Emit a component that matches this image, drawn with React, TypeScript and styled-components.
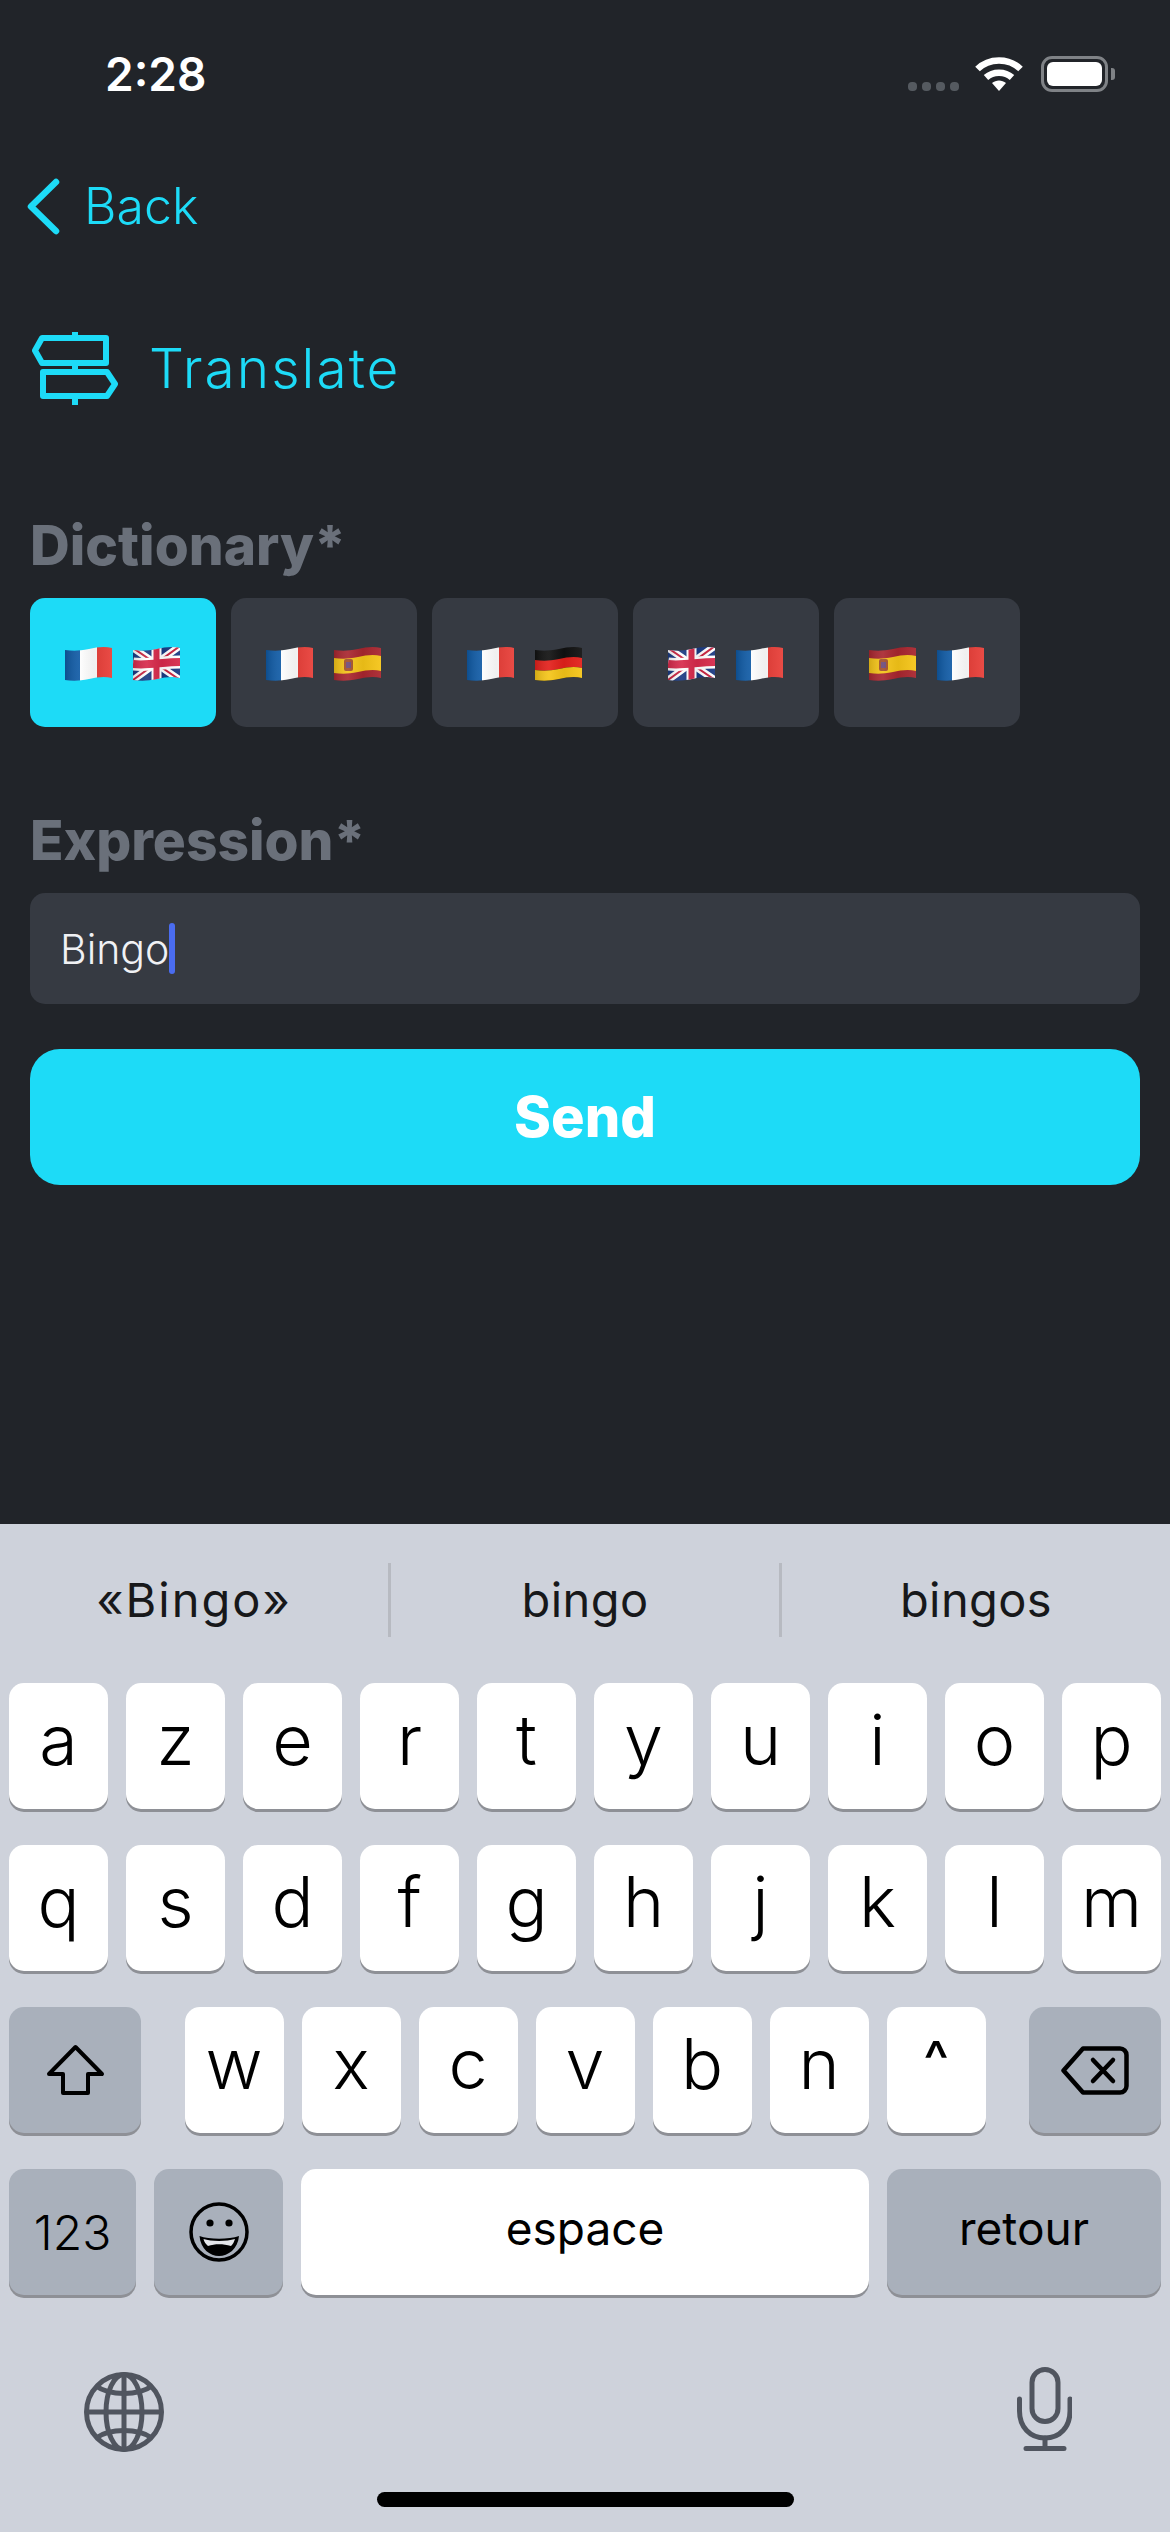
import React from 'react';
import styled, { createGlobalStyle } from 'styled-components';

const cyan = '#1ddbf7';
const dark = '#212429';
const panel = '#363a42';

const GlobalStyle = createGlobalStyle`
	html, body {
		margin: 0;
		padding: 0;
		background: ${dark};
	}
	* {
		box-sizing: border-box;
	}
`;

const Screen = styled.div`
	width: 1170px;
	height: 2532px;
	display: flex;
	flex-direction: column;
	overflow: hidden;
	font-family: Inter, 'Liberation Sans', sans-serif;
`;

const Main = styled.div`
	height: 1524px;
	background: ${dark};
`;

const StatusBar = styled.div`
	height: 178px;
	padding: 56px 55px 0 105px;
	display: flex;
	justify-content: space-between;
	align-items: flex-start;
`;

const Time = styled.div`
	font-size: 46px;
	line-height: 36px;
	font-weight: 600;
	color: #fff;
`;

const StatusIcons = styled.div`
	display: flex;
	align-items: flex-start;
`;

const SignalDots = styled.div`
	display: flex;
	gap: 5px;
	margin: 26px 15px 0 0;
`;

const SignalDot = styled.span`
	width: 9px;
	height: 9px;
	border-radius: 4px;
	background: #555a60;
`;

const Battery = styled.div`
	width: 67px;
	height: 36px;
	margin-left: 17px;
	padding: 3px;
	border: 3px solid #7f8286;
	border-radius: 11px;
`;

const BatteryFill = styled.div`
	height: 100%;
	border-radius: 6px;
	background: #fff;
`;

const BatteryNub = styled.div`
	width: 4px;
	height: 12px;
	margin: 12px 0 0 3px;
	border-radius: 0 3px 3px 0;
	background: #7f8286;
`;

const BackRow = styled.div`
	height: 57px;
	padding-left: 27px;
	display: flex;
	align-items: center;
	gap: 24px;
`;

const BackText = styled.span`
	font-size: 50px;
	line-height: 57px;
	font-weight: 300;
	color: ${cyan};
`;

const TitleRow = styled.div`
	height: 73px;
	margin-top: 97px;
	padding-left: 32px;
	display: flex;
	align-items: center;
	gap: 31px;
`;

const TitleText = styled.span`
	font-size: 55px;
	line-height: 73px;
	font-weight: 300;
	letter-spacing: 2px;
	color: ${cyan};
`;

const Form = styled.div`
	padding: 0 30px;
`;

const Label = styled.div<{ $top: number }>`
	height: 60px;
	margin-top: ${p => p.$top}px;
	font-size: 55px;
	line-height: 60px;
	font-weight: 800;
	color: #6a707a;
`;

const PairRow = styled.div`
	margin-top: 23px;
	display: flex;
	gap: 15px;
`;

const Pair = styled.div<{ $active?: boolean }>`
	width: 186px;
	height: 129px;
	padding: 3px 2px 0 0;
	display: flex;
	align-items: center;
	justify-content: center;
	gap: 21px;
	border-radius: 15px;
	background: ${p => (p.$active ? cyan : panel)};
`;

const Input = styled.div`
	height: 111px;
	margin-top: 23px;
	padding-left: 30px;
	display: flex;
	align-items: center;
	border-radius: 15px;
	background: ${panel};
	font-size: 41px;
	font-weight: 300;
	color: #f0f1f4;
`;

const Caret = styled.span`
	width: 6px;
	height: 51px;
	border-radius: 3px;
	background: #4a6cf0;
`;

const SendButton = styled.div`
	height: 136px;
	margin-top: 45px;
	display: flex;
	align-items: center;
	justify-content: center;
	border-radius: 30px;
	background: ${cyan};
	font-size: 56px;
	font-weight: 800;
	color: #fff;
`;

const Keyboard = styled.div`
	flex: 1;
	background: #ced2db;
`;

const Suggestions = styled.div`
	padding: 39px 0 46px;
	display: flex;
	align-items: center;
`;

const Suggestion = styled.div<{ $spacing?: number }>`
	flex: 1;
	text-align: center;
	font-size: 47px;
	line-height: 74px;
	letter-spacing: ${p => p.$spacing ?? 0.4}px;
	color: #17181a;
`;

const Divider = styled.div`
	width: 3px;
	height: 74px;
	background: #b7bac1;
`;

const KeyRows = styled.div`
	padding: 0 9px;
	display: flex;
	flex-direction: column;
	gap: 36px;
`;

const KeyRow = styled.div<{ $spread?: boolean }>`
	display: flex;
	gap: 18px;
	justify-content: ${p => (p.$spread ? 'space-between' : 'flex-start')};
`;

const LetterGroup = styled.div`
	display: flex;
	gap: 18px;
`;

const Key = styled.div<{ $width?: number; $muted?: boolean }>`
	width: ${p => p.$width ?? 99}px;
	height: 126px;
	padding-bottom: 14px;
	display: flex;
	align-items: center;
	justify-content: center;
	border-radius: 15px;
	background: ${p => (p.$muted ? '#a9b0bb' : '#fff')};
	box-shadow: 0 3px 0 #8e9096;
	font-size: 70px;
	font-weight: 350;
	color: #000;
`;

const CircumflexKey = styled(Key)`
	font-size: 54px;
	font-weight: 500;
	padding-bottom: 22px;
`;

const WordKey = styled(Key)`
	font-size: 46px;
	font-weight: 400;
	padding-bottom: 8px;
`;

const NumberKey = styled(Key)`
	font-size: 48px;
	font-weight: 300;
	padding-bottom: 0;
`;

const IconKey = styled(Key)`
	padding-bottom: 0;
`;

const BottomRow = styled.div`
	margin-top: 74px;
	padding: 0 98px 0 84px;
	display: flex;
	justify-content: space-between;
	align-items: center;
	height: 85px;
`;

const MicIcon = styled.svg`
	margin-bottom: 5px;
`;

const HomeBar = styled.div`
	width: 417px;
	height: 15px;
	margin: 38px auto 0;
	border-radius: 8px;
	background: #000;
`;

type FlagKind = 'fr' | 'gb' | 'es' | 'de';

// one strip of the waving flag, a and b are its top and bottom offsets
const band = (a: number, b: number) =>
	`M0 ${4 + a} C8 ${5 + a} 14 ${5 + a} 24 ${3 + a} C32 ${1 + a} 40 ${a} 47 ${2 + a} L47 ${2 + b} C40 ${b} 32 ${1 + b} 24 ${3 + b} C14 ${5 + b} 8 ${5 + b} 0 ${4 + b} Z`;

function Flag({ kind }: { kind: FlagKind }) {
	return (
		<svg width="47" height="36" viewBox="0 0 47 36">
			<defs>
				<clipPath id={`flag-${kind}`}>
					<path d={band(0, 30)} />
				</clipPath>
				<linearGradient id="flag-shade" x1="0" x2="1" y1="0" y2="0">
					<stop offset="0" stopColor="#000" stopOpacity="0.14" />
					<stop offset="0.3" stopColor="#fff" stopOpacity="0.08" />
					<stop offset="0.62" stopColor="#000" stopOpacity="0.06" />
					<stop offset="1" stopColor="#fff" stopOpacity="0.06" />
				</linearGradient>
			</defs>
			<g clipPath={`url(#flag-${kind})`}>
				{kind === 'fr' && (
					<>
						<rect width="15" height="36" fill="#0f5aa5" />
						<rect x="15" width="17" height="36" fill="#fff" />
						<rect x="32" width="15" height="36" fill="#e8403a" />
					</>
				)}
				{kind === 'gb' && (
					<>
						<rect width="47" height="36" fill="#1b3a83" />
						<path d="M0 2 L47 34 M47 0 L0 34" stroke="#fff" strokeWidth="7" />
						<path d="M0 2 L47 34 M47 0 L0 34" stroke="#c8223f" strokeWidth="2" />
						<path d="M23.5 0 V36" stroke="#fff" strokeWidth="10" />
						<path d="M0 18 C14 20 30 16 47 16" stroke="#fff" strokeWidth="13" fill="none" />
						<path d="M23.5 0 V36" stroke="#d72a4b" strokeWidth="6" />
						<path d="M0 18 C14 20 30 16 47 16" stroke="#d72a4b" strokeWidth="8" fill="none" />
					</>
				)}
				{kind === 'es' && (
					<>
						<rect width="47" height="36" fill="#a9262f" />
						<path d={band(8, 23)} fill="#f5c518" />
						<rect x="10" y="13" width="9" height="12" rx="2" fill="#a3502a" />
						<rect x="12" y="16" width="5" height="6" fill="#6d4a7a" />
					</>
				)}
				{kind === 'de' && (
					<>
						<rect width="47" height="36" fill="#111" />
						<path d={band(10, 20)} fill="#e3201b" />
						<path d={band(20, 32)} fill="#f5c518" />
					</>
				)}
				<rect width="47" height="36" fill="url(#flag-shade)" />
			</g>
		</svg>
	);
}

const pairs: [FlagKind, FlagKind][] = [
	['fr', 'gb'],
	['fr', 'es'],
	['fr', 'de'],
	['gb', 'fr'],
	['es', 'fr'],
];

const iconGrey = '#50555f';

export default function App() {
	return (
		<Screen>
			<GlobalStyle />
			<Main>
				<StatusBar>
					<Time>2:28</Time>
					<StatusIcons>
						<SignalDots>
							<SignalDot />
							<SignalDot />
							<SignalDot />
							<SignalDot />
						</SignalDots>
						<svg width="50" height="36" viewBox="0 0 50 36" fill="none" stroke="#fff">
							<path d="M3.5 13 C15 1.5 35 1.5 46.5 13" strokeWidth="6.5" />
							<path d="M12 21.5 C19 15 31 15 38 21.5" strokeWidth="6.5" />
							<path d="M18 27 C22 23.5 28 23.5 32 27 L25 35 Z" fill="#fff" stroke="none" />
						</svg>
						<Battery>
							<BatteryFill />
						</Battery>
						<BatteryNub />
					</StatusIcons>
				</StatusBar>

				<BackRow>
					<svg width="33" height="57" viewBox="0 0 33 57" fill="none" stroke={cyan} strokeWidth="6.5" strokeLinecap="round" strokeLinejoin="round">
						<path d="M29 4 L4 28.5 L29 53" />
					</svg>
					<BackText>Back</BackText>
				</BackRow>

				<TitleRow>
					<svg width="86" height="73" viewBox="0 0 86 73" fill="none" stroke={cyan} strokeWidth="6" strokeLinejoin="round">
						<path d="M10 6 H74 V31 H10 L3 18.5 Z" />
						<path d="M11 40 H75 L83 52 L75 64 H11 Z" />
						<path d="M43 0 V6 M43 31 V40 M43 64 V73" />
					</svg>
					<TitleText>Translate</TitleText>
				</TitleRow>

				<Form>
					<Label $top={110}>Dictionary*</Label>
					<PairRow>
						{pairs.map(([from, to], i) => (
							<Pair key={`${from}-${to}`} $active={i === 0}>
								<Flag kind={from} />
								<Flag kind={to} />
							</Pair>
						))}
					</PairRow>

					<Label $top={83}>Expression*</Label>
					<Input>
						Bingo
						<Caret />
					</Input>
					<SendButton>Send</SendButton>
				</Form>
			</Main>

			<Keyboard>
				<Suggestions>
					<Suggestion $spacing={2}>«Bingo»</Suggestion>
					<Divider />
					<Suggestion>bingo</Suggestion>
					<Divider />
					<Suggestion>bingos</Suggestion>
				</Suggestions>

				<KeyRows>
					<KeyRow>
						{'azertyuiop'.split('').map(c => (
							<Key key={c}>{c}</Key>
						))}
					</KeyRow>
					<KeyRow>
						{'qsdfghjklm'.split('').map(c => (
							<Key key={c}>{c}</Key>
						))}
					</KeyRow>
					<KeyRow $spread>
						<IconKey $width={132} $muted>
							<svg width="59" height="52" viewBox="0 0 59 52" fill="none" stroke="#000" strokeWidth="4" strokeLinejoin="round">
								<path d="M29.5 3 L56 30 H42 V49 H17 V30 H3 Z" />
							</svg>
						</IconKey>
						<LetterGroup>
							{'wxcvbn'.split('').map(c => (
								<Key key={c}>{c}</Key>
							))}
							<CircumflexKey>^</CircumflexKey>
						</LetterGroup>
						<IconKey $width={132} $muted>
							<svg width="68" height="49" viewBox="0 0 68 49" fill="none" stroke="#000" strokeWidth="4.5" strokeLinejoin="round" strokeLinecap="round">
								<path d="M22 2.5 H59 a6.5 6.5 0 0 1 6.5 6.5 V40 a6.5 6.5 0 0 1 -6.5 6.5 H22 L2.5 24.5 Z" />
								<path d="M32 14 L52 35 M52 14 L32 35" />
							</svg>
						</IconKey>
					</KeyRow>
					<KeyRow>
						<NumberKey $width={127} $muted>123</NumberKey>
						<IconKey $width={129} $muted>
							<svg width="60" height="60" viewBox="0 0 60 60">
								<circle cx="30" cy="30" r="28" fill="none" stroke="#000" strokeWidth="3.5" />
								<circle cx="21" cy="21" r="3.6" />
								<circle cx="40" cy="21" r="3.6" />
								<path d="M10.5 34 C20 37.5 40 37.5 50 34 C49 47 39 54 30 54 C21 54 11.5 47 10.5 34 Z" />
								<path d="M14.5 37 C22 39.5 38 39.5 46 37 C45 40 44 42 42 44 C34 41.5 26 41.5 19 44 C17 42 15 40 14.5 37 Z" fill="#e4e6ea" />
							</svg>
						</IconKey>
						<WordKey $width={568}>espace</WordKey>
						<WordKey $width={274} $muted>retour</WordKey>
					</KeyRow>
				</KeyRows>

				<BottomRow>
					<svg width="80" height="80" viewBox="0 0 80 80" fill="none" stroke={iconGrey} strokeWidth="5">
						<circle cx="40" cy="40" r="37.5" />
						<ellipse cx="40" cy="40" rx="18" ry="37.5" />
						<path d="M40 2 V78 M2 40 H78" />
						<path d="M12 14 C26 24 54 24 68 14 M12 66 C26 56 54 56 68 66" />
					</svg>
					<MicIcon width="55" height="84" viewBox="0 0 55 84" fill="none" stroke={iconGrey} strokeWidth="5" strokeLinecap="round">
						<rect x="15" y="2.5" width="26" height="52" rx="13" />
						<path d="M2.5 32 V44 C2.5 60 13 71 28 71 C43 71 53 60 53 44 V32" />
						<path d="M28 71 V81 M9 81.5 H47" />
					</MicIcon>
				</BottomRow>
				<HomeBar />
			</Keyboard>
		</Screen>
	);
}
